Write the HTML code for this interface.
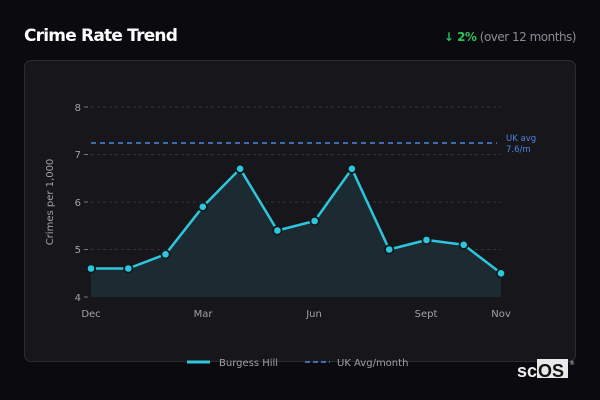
<!DOCTYPE html>
<html><head><meta charset="utf-8"><style>
body{margin:0;width:600px;height:400px;background:#0b0b0f;font-family:"Liberation Sans","DejaVu Sans",sans-serif;overflow:hidden;position:relative}
.t{position:absolute;left:24px;top:26px;color:#fff;font-size:17px;font-weight:bold;font-family:"DejaVu Sans",sans-serif;letter-spacing:-0.8px}
.r{position:absolute;right:24px;top:30px;font-size:12px;color:#8a8a90;font-family:"DejaVu Sans",sans-serif;letter-spacing:-0.5px}
.r b{color:#2fbf5a}
.card{position:absolute;left:24px;top:60px;width:550px;height:300px;border:1px solid #2c2c30;border-radius:7px;background:#17171b}
svg{position:absolute;left:0;top:0}
</style></head><body>
<div class="t">Crime Rate Trend</div>
<div class="r"><b>↓ 2%</b> (over 12 months)</div>
<div class="card"></div>
<svg width="600" height="400" font-family="DejaVu Sans,sans-serif">
<g stroke="#34343a" stroke-dasharray="3,3" stroke-width="1">
<line x1="91" y1="107" x2="501" y2="107"/><line x1="91" y1="154.5" x2="501" y2="154.5"/><line x1="91" y1="202" x2="501" y2="202"/><line x1="91" y1="249.5" x2="501" y2="249.5"/>
</g>
<g stroke="#777" stroke-width="1"><line x1="84" y1="107" x2="88" y2="107"/><line x1="84" y1="154.5" x2="88" y2="154.5"/><line x1="84" y1="202" x2="88" y2="202"/><line x1="84" y1="249.5" x2="88" y2="249.5"/><line x1="84" y1="297" x2="88" y2="297"/></g>
<g fill="#a0a0a6" font-size="10" text-anchor="end"><text x="81" y="111">8</text><text x="81" y="158">7</text><text x="81" y="206">6</text><text x="81" y="253">5</text><text x="81" y="301">4</text></g>
<text transform="translate(53,202) rotate(-90)" fill="#a0a0a6" font-size="10" text-anchor="middle">Crimes per 1,000</text>
<g fill="#a0a0a6" font-size="10" text-anchor="middle"><text x="91" y="317">Dec</text><text x="203" y="317">Mar</text><text x="314" y="317">Jun</text><text x="426" y="317">Sept</text><text x="501" y="317">Nov</text></g>
<line x1="91" y1="143" x2="497" y2="143" stroke="#4f86e0" stroke-width="1.5" stroke-dasharray="5,4"/>
<text x="506" y="141" fill="#4f86e0" font-size="8.5">UK avg</text><text x="506" y="152" fill="#4f86e0" font-size="8.5">7.6/m</text>
<path d="M91,268.5 L128.3,268.5 L165.5,254.3 L202.8,206.8 L240.1,168.8 L277.4,230.5 L314.6,221 L351.9,168.8 L389.2,249.5 L426.5,240 L463.7,244.8 L501,273.3 L501,297 L91,297Z" fill="#1b2b31"/>
<path d="M91,268.5 L128.3,268.5 L165.5,254.3 L202.8,206.8 L240.1,168.8 L277.4,230.5 L314.6,221 L351.9,168.8 L389.2,249.5 L426.5,240 L463.7,244.8 L501,273.3" fill="none" stroke="#2ec6dc" stroke-width="2.5" stroke-linejoin="round"/>
<g fill="#2ec6dc" stroke="#0f1a1e" stroke-width="1.8">
<circle cx="91" cy="268.5" r="4.2"/><circle cx="128.3" cy="268.5" r="4.2"/><circle cx="165.5" cy="254.3" r="4.2"/><circle cx="202.8" cy="206.8" r="4.2"/><circle cx="240.1" cy="168.8" r="4.2"/><circle cx="277.4" cy="230.5" r="4.2"/><circle cx="314.6" cy="221" r="4.2"/><circle cx="351.9" cy="168.8" r="4.2"/><circle cx="389.2" cy="249.5" r="4.2"/><circle cx="426.5" cy="240" r="4.2"/><circle cx="463.7" cy="244.8" r="4.2"/><circle cx="501" cy="273.3" r="4.2"/>
</g>
<line x1="187" y1="362" x2="210" y2="362" stroke="#2ec6dc" stroke-width="3"/>
<text x="219" y="366" fill="#a0a0a6" font-size="10">Burgess Hill</text>
<line x1="305" y1="362" x2="330" y2="362" stroke="#4f86e0" stroke-width="1.5" stroke-dasharray="5,3"/>
<text x="337" y="366" fill="#a0a0a6" font-size="10">UK Avg/month</text>
<rect x="537" y="359" width="31" height="19" fill="#e8e8e8"/>
<text x="517" y="377" fill="#eee" font-size="18" font-weight="bold" font-family="Liberation Sans,sans-serif">sc</text>
<text x="538" y="377" fill="#111" font-size="18" font-weight="bold" font-family="Liberation Sans,sans-serif">OS</text>
<text x="569" y="365" fill="#ccc" font-size="6">®</text>
</svg>
</body></html>
